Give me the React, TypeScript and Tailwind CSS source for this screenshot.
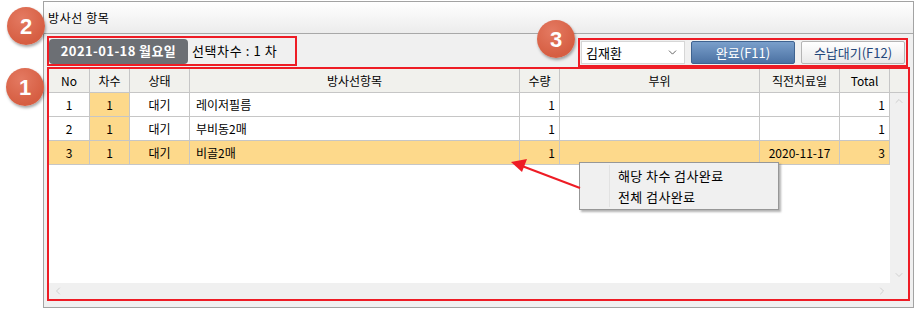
import { ChevronDown, ChevronUp, ChevronLeft, ChevronRight } from "lucide-react";

const FONT = { fontFamily: '"Noto Sans CJK KR", "Liberation Sans", sans-serif' };

const COLS = [
  { key: "no",    label: "No",         w: "w-[41px]",  align: "justify-center" },
  { key: "cha",   label: "차수",       w: "w-[40px]",  align: "justify-center" },
  { key: "state", label: "상태",       w: "w-[60px]",  align: "justify-center" },
  { key: "item",  label: "방사선항목", w: "w-[330px]", align: "justify-start pl-[6px]" },
  { key: "qty",   label: "수량",       w: "w-[40px]",  align: "justify-end pr-[4px]" },
  { key: "part",  label: "부위",       w: "w-[200px]", align: "justify-center" },
  { key: "last",  label: "직전치료일", w: "w-[80px]",  align: "justify-center" },
  { key: "total", label: "Total",      w: "w-[50px]",  align: "justify-end pr-[4px]" },
] as const;

type Row = Record<(typeof COLS)[number]["key"], string>;

const ROWS: Row[] = [
  { no: "1", cha: "1", state: "대기", item: "레이저필름", qty: "1", part: "", last: "",           total: "1" },
  { no: "2", cha: "1", state: "대기", item: "부비동2매",  qty: "1", part: "", last: "",           total: "1" },
  { no: "3", cha: "1", state: "대기", item: "비골2매",    qty: "1", part: "", last: "2020-11-17", total: "3" },
];

function Badge({ n, className }: { n: string; className: string }) {
  return (
    <div
      className={`absolute w-[38px] h-[38px] rounded-full flex items-center justify-center text-white text-[22px] font-bold bg-[radial-gradient(circle_at_40%_30%,#e47a62,#d65e42_70%)] shadow-[1px_2px_3px_rgba(0,0,0,0.35)] ${className}`}
      style={{ fontFamily: '"Liberation Sans", sans-serif' }}
    >
      {n}
    </div>
  );
}

export default function App() {
  return (
    <div className="relative w-[915px] h-[309px] bg-white text-[12px] text-black overflow-hidden" style={FONT}>
      {/* panel */}
      <div className="ml-[43px] mt-[1px] w-[871px] h-[307px] border border-[#a3a3a3] bg-[#f0f0f0] flex flex-col">
        <div className="h-[32px] shrink-0 border-b border-[#a8a8a8] bg-gradient-to-b from-white to-[#ececec] flex items-center pl-[4px] text-[12px] tracking-[0.6px]">
          방사선 항목
        </div>

        {/* toolbar */}
        <div className="h-[33px] shrink-0 flex justify-between pl-[3px] pr-[5px]">
          <div className="mt-[2px] h-[30px] w-[250px] border-2 border-[#ee1c25] flex items-center gap-[4px]">
            <div className="h-[25px] w-[139px] rounded-[4px] bg-[#6c6f74] text-white font-bold text-[13px] flex items-center justify-center tracking-[0.4px]">
              2021-01-18 월요일
            </div>
            <span className="text-[13px] tracking-[0.6px]">선택차수 :&nbsp;1 차</span>
          </div>
          <div className="self-end h-[29px] w-[330px] border-2 border-[#ee1c25] flex items-center pl-[1px] gap-[6px]">
            <div className="h-[23px] w-[104px] bg-white border border-[#d6d6d6] flex items-center justify-between pl-[4px] pr-[5px] text-[13px]">
              김재환
              <ChevronDown size={13} strokeWidth={1.5} className="text-[#444]" />
            </div>
            <div className="h-[23px] w-[104px] rounded-[2px] border border-[#3f6390] bg-gradient-to-b from-[#7a9fcb] to-[#4c72a3] text-white flex items-center justify-center text-[13px]">
              완료(F11)
            </div>
            <div className="h-[23px] w-[104px] rounded-[2px] border border-[#b5b5b5] bg-gradient-to-b from-white to-[#e9e9e9] text-[#23467a] flex items-center justify-center text-[13px]">
              수납대기(F12)
            </div>
          </div>
        </div>

        {/* grid */}
        <div className="mx-[3px] h-[234px] border-2 border-[#ee1c25] bg-white flex flex-col">
          <div className="h-[24px] shrink-0 flex bg-[#f1f1ed] border-b border-[#c6c6c6]">
            {COLS.map((c) => (
              <div key={c.key} className={`${c.w} shrink-0 border-r border-[#c6c6c6] flex items-center justify-center`}>
                {c.label}
              </div>
            ))}
            <div className="flex-1" />
          </div>
          <div className="flex h-[191px]">
            <div className="w-[841px] shrink-0 flex flex-col">
              {ROWS.map((r, i) => (
                <div
                  key={r.no}
                  className={`h-[24px] flex border-b border-[#c6c6c6] ${i === 2 ? "bg-[#fdd98b]" : "bg-white"}`}
                >
                  {COLS.map((c) => (
                    <div
                      key={c.key}
                      className={`${c.w} shrink-0 border-r border-[#c6c6c6] flex items-center ${c.align} ${c.key === "cha" ? "bg-[#fdd98b]" : ""}`}
                    >
                      {r[c.key]}
                    </div>
                  ))}
                </div>
              ))}
            </div>
            <div className="flex-1 bg-[#f0f0f0] flex flex-col items-center justify-between py-[2px] text-[#c4c4c4]">
              <ChevronUp size={12} strokeWidth={1.5} />
              <ChevronDown size={12} strokeWidth={1.5} />
            </div>
          </div>
          <div className="h-[16px] shrink-0 bg-[#f0f0f0] flex items-center justify-between pl-[3px] pr-[20px] text-[#c4c4c4]">
            <ChevronLeft size={12} strokeWidth={1.5} />
            <ChevronRight size={12} strokeWidth={1.5} />
          </div>
        </div>
      </div>

      {/* context menu */}
      <div className="absolute left-[579px] top-[162px] w-[200px] h-[48px] bg-[#f0f0f0] border border-[#979797] shadow-[2px_2px_2px_rgba(0,0,0,0.3)] flex">
        <div className="w-[30px] border-r border-[#e2e2e2] my-[2px]" />
        <div className="flex flex-col pl-[8px] pt-[2px] text-[13px] leading-[21px] tracking-[0.4px]">
          <span>해당 차수 검사완료</span>
          <span>전체 검사완료</span>
        </div>
      </div>

      {/* arrow */}
      <svg className="absolute left-0 top-0 pointer-events-none" width="915" height="309">
        <line x1="580" y1="188" x2="522" y2="166" stroke="#ee1c25" strokeWidth="2" />
        <polygon points="511,162 527,159 522,172" fill="#ee1c25" />
      </svg>

      <Badge n="2" className="left-[7px] top-[7px]" />
      <Badge n="1" className="left-[6px] top-[68px]" />
      <Badge n="3" className="left-[537px] top-[20px]" />
    </div>
  );
}
